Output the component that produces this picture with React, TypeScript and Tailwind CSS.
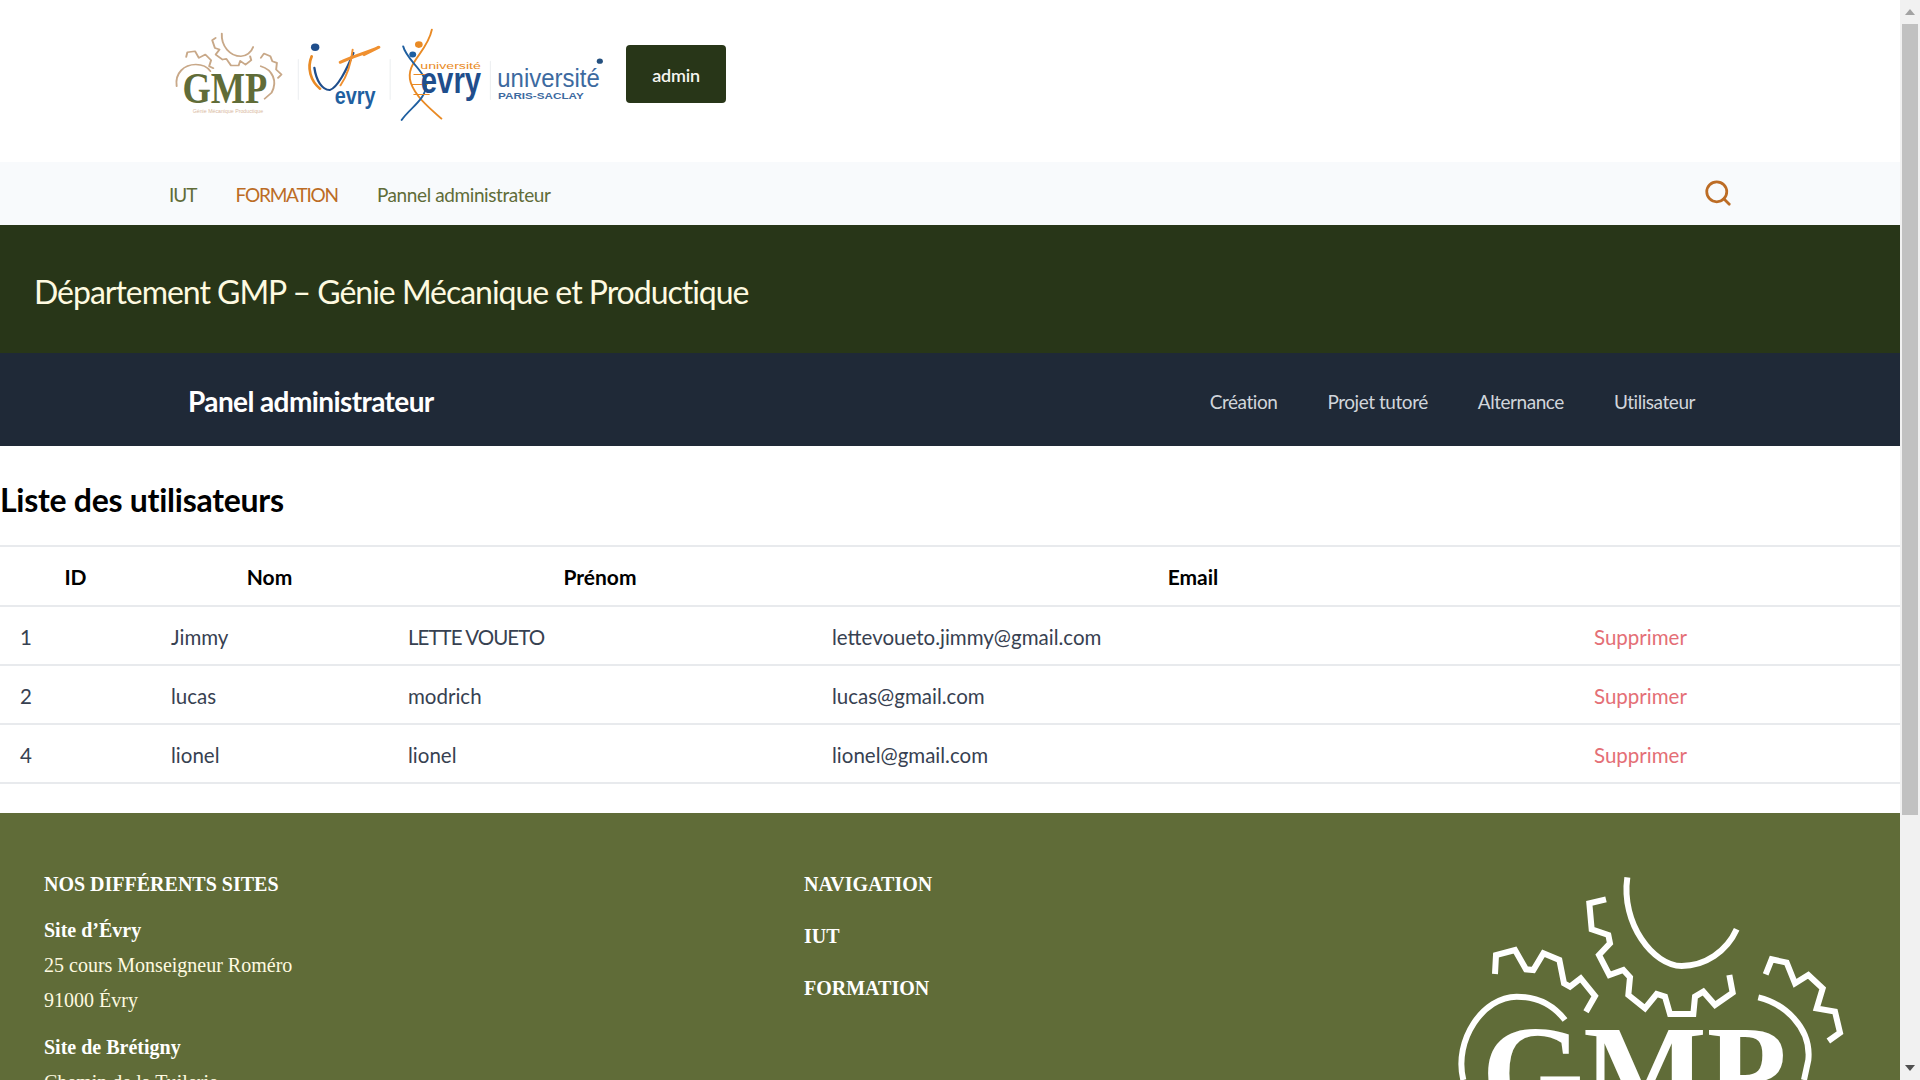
import { Search } from "lucide-react";

const users = [
  { id: 1, nom: "Jimmy", prenom: "LETTE VOUETO", prenomClass: "tracking-[-0.95px]", email: "lettevoueto.jimmy@gmail.com" },
  { id: 2, nom: "lucas", prenom: "modrich", prenomClass: "", email: "lucas@gmail.com" },
  { id: 4, nom: "lionel", prenom: "lionel", prenomClass: "", email: "lionel@gmail.com" },
];

function HeaderLogos() {
  return (
    <svg viewBox="50 40 1150 310" preserveAspectRatio="none" className="w-[440px] h-[103px] shrink-0" fill="none" strokeLinecap="round" strokeLinejoin="round">
      <g stroke="#c8a888" strokeWidth="5">
        <path d="M188 72C186 110 210 140 238 140C252 140 265 128 270 112" />
        <path d="M172 85L163 92L170 115L182 120L172 135L190 150L200 148L212 168L232 168L236 154L250 165L265 152L262 140" />
        <path d="M95 142L98 128L118 125L128 145L145 135L160 152L155 170L166 176" />
        <path d="M290 145L298 132L315 140L320 155L332 160L330 180L344 195L335 205" />
        <path d="M70 230C65 190 90 165 120 165C140 165 150 172 158 185" />
        <path d="M290 170C320 180 335 215 318 250L300 268" />
      </g>
      <text x="85" y="280" textLength="222" lengthAdjust="spacingAndGlyphs" fontSize="136" fontWeight="700" fill="#606c38" fontFamily="'Liberation Serif', serif">GMP</text>
      <text x="112" y="310" textLength="184" lengthAdjust="spacingAndGlyphs" fontSize="15" fill="#d9b9a0" fontFamily="'Liberation Sans', sans-serif">Génie Mécanique Productique</text>

      <path d="M388 150V270M628 150V270M890 155V270" stroke="#eef0f2" strokeWidth="3" />

      <circle cx="432" cy="113" r="11" fill="#1f4e8c" />
      <path d="M423 140C410 175 420 215 445 238" stroke="#e98a24" strokeWidth="7" />
      <path d="M430 175C435 215 450 240 470 242C490 235 515 180 532 130" stroke="#1f4e8c" strokeWidth="6" />
      <path d="M498 158C530 140 565 130 598 113L560 135" stroke="#f09030" strokeWidth="9" />
      <path d="M530 120C525 170 515 200 498 228" stroke="#f09030" strokeWidth="5" />
      <text x="483" y="283" textLength="107" lengthAdjust="spacingAndGlyphs" fontSize="70" fontWeight="700" fill="#1f5fa0" fontFamily="'Liberation Sans', sans-serif">evry</text>

      <path d="M737 60C725 130 665 160 682 220C695 265 740 305 762 328" stroke="#e98a24" strokeWidth="5" />
      <path d="M662 110C670 150 720 185 722 225C722 270 680 295 658 332" stroke="#1f5fa0" strokeWidth="5" />
      <path d="M690 195H720M685 225H725M690 255H730" stroke="#e98a24" strokeWidth="3" />
      <circle cx="703" cy="105" r="10" fill="#e98a24" />
      <circle cx="687" cy="135" r="9" fill="#1f5fa0" />
      <text x="707" y="178" textLength="158" lengthAdjust="spacingAndGlyphs" fontSize="30" fill="#e98a24" fontFamily="'Liberation Sans', sans-serif">université</text>
      <text x="708" y="252" textLength="158" lengthAdjust="spacingAndGlyphs" fontSize="110" fontWeight="700" fill="#1f4e8c" fontFamily="'Liberation Sans', sans-serif">evry</text>

      <text x="908" y="232" textLength="268" lengthAdjust="spacingAndGlyphs" fontSize="76" fill="#3d6a9f" fontFamily="'Liberation Sans', sans-serif">université</text>
      <text x="910" y="268" textLength="224" lengthAdjust="spacingAndGlyphs" fontSize="28" fontWeight="700" fill="#3d6a9f" fontFamily="'Liberation Sans', sans-serif">PARIS-SACLAY</text>
      <circle cx="1176" cy="155" r="8" fill="#24507f" />
    </svg>
  );
}

function FooterLogo() {
  return (
    <svg viewBox="0 0 1560 720" className="w-[520px] h-[240px] shrink-0" fill="none" stroke="#ffffff" strokeWidth="18">
      <path d="M682 112C662 250 760 378 845 378C915 378 980 335 1010 268" />
      <path d="M618 178L568 190L575 268L625 285L630 310L597 345L628 405L670 390L690 412L685 465L735 505L770 462L795 470L810 522H880L885 470L910 455L945 495L998 458L988 405" />
      <path d="M285 402L288 345L345 330L378 388L400 390L430 340L478 360L492 430L510 440L542 415L585 468L558 515" />
      <path d="M1097 403L1115 358L1160 368L1185 430L1225 405L1268 445L1250 505L1305 515L1320 578L1285 603" />
      <path d="M190 720C160 600 250 470 350 470C410 470 460 495 495 540" />
      <path d="M1075 472C1150 490 1235 560 1225 660L1212 720" />
      <text x="245" y="826" textLength="915" lengthAdjust="spacingAndGlyphs" fontSize="386" fontWeight="700" fill="#ffffff" stroke="none" fontFamily="'Liberation Serif', serif">GMP</text>
    </svg>
  );
}

export default function App() {
  return (
    <div className="flex h-screen w-full overflow-hidden bg-white font-['Lato','Liberation_Sans',sans-serif]">
      <div className="flex h-full w-[1900px] shrink-0 flex-col overflow-hidden">
        <header className="flex h-[162px] shrink-0 items-start pl-[169px] pt-[23px]">
          <HeaderLogos />
          <button className="ml-[17px] mt-[22px] h-[58px] w-[100px] rounded bg-[#283618] pt-[2px] text-[18px] font-semibold tracking-[-0.2px] text-[#f5f5f0]">admin</button>
        </header>

        <nav className="flex h-[63px] shrink-0 items-center bg-[#f8fafc] pl-[169px] pr-[167px] text-[19px] tracking-[-0.4px] text-[#606c38]">
          <a className="pt-[4px] tracking-[-1px]">IUT</a>
          <a className="ml-[39px] pt-[4px] tracking-[-1.2px] text-[#bc6c25]">FORMATION</a>
          <a className="ml-[39px] pt-[4px]">Pannel administrateur</a>
          <Search className="ml-auto -mt-[1px] h-[30px] w-[30px] text-[#bc6c25]" strokeWidth={2.2} />
        </nav>

        <div className="flex h-[128px] shrink-0 items-center bg-[#283618] pl-[34px] pt-[5px] text-[32px] tracking-[-1.02px] text-[#fefae0]">
          Département GMP – Génie Mécanique et Productique
        </div>

        <div className="flex h-[93px] shrink-0 items-center bg-[#1f2937] pl-[188px] pr-[205px] pt-[3px]">
          <span className="text-[28px] font-bold tracking-[-0.6px] text-white">Panel administrateur</span>
          <div className="ml-auto flex gap-[50px] pt-[2px] text-[19px] tracking-[-0.45px] text-[#d1d5db]">
            <a>Création</a>
            <a>Projet tutoré</a>
            <a>Alternance</a>
            <a>Utilisateur</a>
          </div>
        </div>

        <h1 className="flex h-[99px] shrink-0 items-center pt-[9px] text-[32px] font-bold tracking-[-0.27px] text-black">Liste des utilisateurs</h1>

        <table className="w-[1900px] shrink-0 table-fixed border-collapse text-[20.5px] text-[#374151]">
          <colgroup>
            <col className="w-[151px]" />
            <col className="w-[237px]" />
            <col className="w-[424px]" />
            <col className="w-[762px]" />
            <col className="w-[326px]" />
          </colgroup>
          <thead>
            <tr className="h-[60px] border-y-2 border-[#e8eaed] text-[21px] text-black">
              <th className="pt-[2px] font-bold">ID</th>
              <th className="pt-[2px] font-bold">Nom</th>
              <th className="pt-[2px] font-bold">Prénom</th>
              <th className="pt-[2px] font-bold">Email</th>
              <th />
            </tr>
          </thead>
          <tbody>
            {users.map((u) => (
              <tr key={u.id} className="h-[59px] border-b-2 border-[#e8eaed]">
                <td className="pl-[20px] pt-[3px]">{u.id}</td>
                <td className="pl-[20px] pt-[3px]">{u.nom}</td>
                <td className={`pl-[20px] pt-[3px] ${u.prenomClass}`}>{u.prenom}</td>
                <td className="pl-[20px] pt-[3px]">{u.email}</td>
                <td className="pl-[20px] pt-[3px] text-[#e46f76]">Supprimer</td>
              </tr>
            ))}
          </tbody>
        </table>

        <footer className="mt-[29px] flex min-h-0 flex-1 overflow-hidden bg-[#606c38] font-['Liberation_Serif',serif] text-[20px] leading-[35px] text-[#fefae0]">
          <div className="w-[804px] shrink-0 pl-[44px] pt-[54px]">
            <h3 className="font-bold uppercase text-white">Nos différents sites</h3>
            <p className="mt-[11px] font-bold text-white">Site d’Évry</p>
            <p>25 cours Monseigneur Roméro</p>
            <p>91000 Évry</p>
            <p className="mt-[12px] font-bold text-white">Site de Brétigny</p>
            <p>Chemin de la Tuilerie</p>
          </div>
          <div className="w-[596px] shrink-0 pt-[54px] font-bold text-white">
            <p className="uppercase">Navigation</p>
            <p className="mt-[17px] uppercase">IUT</p>
            <p className="mt-[17px] uppercase">Formation</p>
          </div>
          <div className="pt-[27px]">
            <FooterLogo />
          </div>
        </footer>
      </div>

      <div className="flex h-full w-[20px] shrink-0 flex-col items-center bg-[#f1f1f1]">
        <div className="flex h-[24px] w-full items-center justify-center">
          <div className="h-0 w-0 border-x-[5px] border-b-[6px] border-x-transparent border-b-[#a3a3a3]" />
        </div>
        <div className="h-[791px] w-[16px] bg-[#c1c1c1]" />
        <div className="mt-auto flex h-[24px] w-full items-center justify-center">
          <div className="h-0 w-0 border-x-[5px] border-t-[6px] border-x-transparent border-t-[#505050]" />
        </div>
      </div>
    </div>
  );
}
